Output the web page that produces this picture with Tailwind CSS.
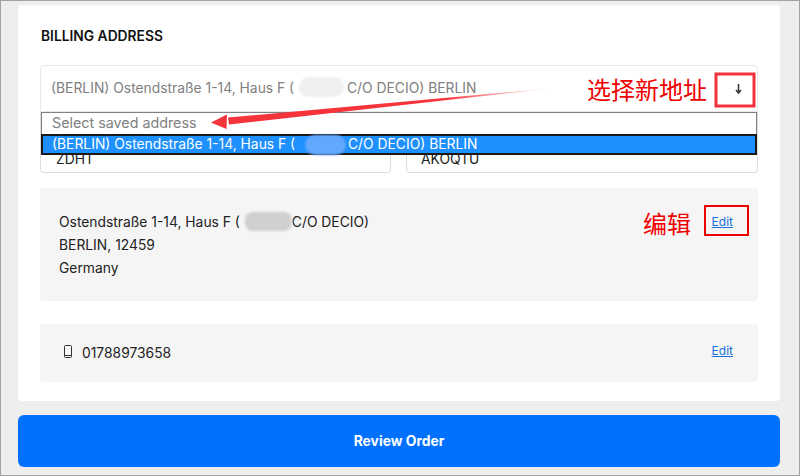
<!DOCTYPE html>
<html lang="en">
  <head>
    <meta charset="UTF-8" />
    <title>Billing Address</title>
    <script src="https://cdn.jsdelivr.net/npm/@tailwindcss/browser@4"></script>
  </head>
  <body class="bg-[#eeeeee] font-['Inter',sans-serif]">
    <div class="relative w-[800px] h-[476px] overflow-hidden border border-[#a3a3a3] pl-[17px] pr-[19px] pt-1">
      <!-- Billing card -->
      <div class="bg-white rounded-[4px] h-[396px] px-[22px] pt-[23px]">
        <h2 class="pl-px text-[13.8px] leading-4 font-semibold text-[#111111]">BILLING ADDRESS</h2>

        <div class="mt-[21px] h-[47px] border border-[#e8e8e8] rounded-t-[4px] flex items-center pl-[10px] text-[13.85px] text-[#808080] whitespace-pre">(BERLIN) Ostendstraße 1-14, Haus F ( <span class="inline-block w-[45px]"></span> C/O DECIO) BERLIN</div>

        <div class="grid grid-cols-[351px_352px] gap-[15px] h-[61px]">
          <div class="border border-t-0 border-[#dddddd] rounded-b-[4px] flex items-end pl-[15px] pb-[5px] text-[13.85px] leading-4 text-[#222222]">ZDHT</div>
          <div class="border border-t-0 border-[#dddddd] rounded-b-[4px] flex items-end pl-[14px] pb-[5px] text-[13.85px] leading-4 text-[#222222]">AKOQTU</div>
        </div>

        <div class="mt-[15px] h-[113px] bg-[#f5f5f5] rounded-[4px] pl-[19px] pr-[25px] pt-[23px] flex justify-between text-[13.85px] leading-[23px] text-[#222222]">
          <div>
            <p class="whitespace-pre">Ostendstraße 1-14, Haus F ( <span class="inline-block w-[48px]"></span>C/O DECIO)</p>
            <p>BERLIN, 12459</p>
            <p>Germany</p>
          </div>
          <a class="text-[12px] leading-[21px] text-[#1a6fd8] underline">Edit</a>
        </div>

        <div class="mt-[23px] h-[58px] bg-[#f5f5f5] rounded-[4px] pl-[24px] pr-[25px] flex items-center justify-between text-[13.85px] text-[#222222]">
          <div class="flex items-center gap-[10px]">
            <svg class="-mt-[3px]" width="8" height="13" viewBox="0 0 8 13" fill="none" stroke="#333333"><rect x="0.5" y="0.5" width="7" height="12" rx="1"/><path d="M1 10.5h6" /></svg>
            <span>01788973658</span>
          </div>
          <a class="text-[12px] text-[#1a6fd8] underline -mt-[4px]">Edit</a>
        </div>
      </div>

      <!-- Review button -->
      <button class="mt-[14px] w-full h-[52px] bg-[#0070ff] rounded-[6px] text-white text-[13.85px] font-bold">Review Order</button>

      <!-- Open dropdown list -->
      <div class="absolute left-[40px] top-[111px] w-[716px] h-[43px] bg-white border border-[#808080] text-[13.85px]">
        <div class="h-[21px] pl-[10px] leading-[20px] text-[14.3px] text-[#808080]">Select saved address</div>
        <div class="h-[21px] -mx-px bg-[#1e90ff] border-2 border-[#1a1a1a] pl-[9px] leading-[16px] text-white whitespace-pre">(BERLIN) Ostendstraße 1-14, Haus F ( <span class="inline-block w-[45px]"></span> C/O DECIO) BERLIN</div>
      </div>

      <!-- Blurred-out names -->
      <div class="absolute left-[298px] top-[76px] w-[45px] h-[20px] rounded-[10px] bg-[#efefef] blur-[1px]"></div>
      <div class="absolute left-[304px] top-[134px] w-[41px] h-[20px] rounded-[10px] bg-[#62a8ff] blur-[1px]"></div>
      <div class="absolute left-[244px] top-[211px] w-[47px] h-[19px] rounded-[8px] bg-[#d0d0d0] blur-[1px]"></div>

      <!-- Select arrow -->
      <svg class="absolute left-[733px] top-[82px]" width="9" height="12" viewBox="0 0 9 12" fill="none" stroke="#333333" stroke-width="1.5"><path d="M4.5 1v9M2 7l2.5 3L7 7"/></svg>

      <!-- Screenshot annotations -->
      <svg class="absolute left-[-1px] top-[-1px]" width="800" height="476" viewBox="0 0 800 476" fill="none">
        <defs>
          <linearGradient id="arrowFade" x1="555" y1="88" x2="230" y2="120" gradientUnits="userSpaceOnUse">
            <stop offset="0" stop-color="#ff3b3b" stop-opacity="0"/>
            <stop offset="0.35" stop-color="#f4333b"/>
            <stop offset="1" stop-color="#f4333b"/>
          </linearGradient>
        </defs>
        <path d="M555 88L228 117.5L229 124.5Z" fill="url(#arrowFade)"/>
        <path d="M211 122.5L227 114.5L226.5 129Z" fill="#f4333b"/>
        <rect x="716" y="74" width="38" height="32" stroke="#f0323a" stroke-width="3"/>
        <rect x="705" y="206" width="43" height="29" stroke="#ee0000" stroke-width="2"/>
      </svg>
      <span class="absolute left-[586px] top-[72px] text-[24px] leading-8 text-[#f00000] font-['Noto_Sans_CJK_SC',sans-serif]">选择新地址</span>
      <span class="absolute left-[642px] top-[206px] text-[24px] leading-8 text-[#f00000] font-['Noto_Sans_CJK_SC',sans-serif]">编辑</span>
    </div>
  </body>
</html>
